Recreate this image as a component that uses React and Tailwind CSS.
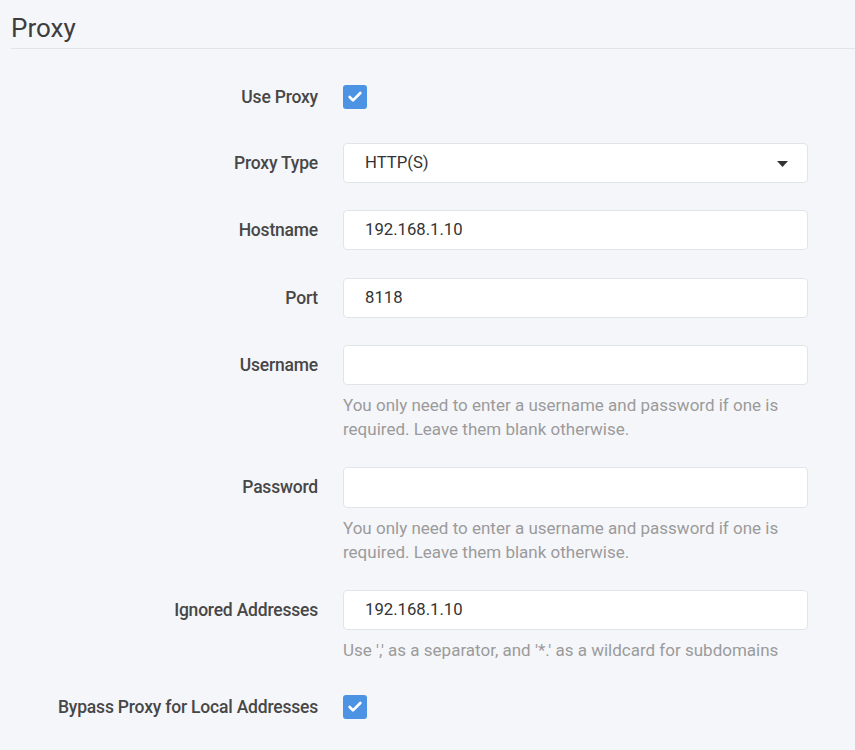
import { Check } from 'lucide-react';

function Row({ label, children, help, className = '' }) {
  return (
    <div className={`grid grid-cols-[307px_465px] gap-x-[25px] ${className}`}>
      <div className="flex h-10 items-center justify-end whitespace-nowrap text-[17.5px] font-medium text-[#474747] tracking-[-0.2px]">
        {label}
      </div>
      <div>
        {children}
        {help && (
          <p className="mb-[2px] mt-[8px] text-[17px] leading-6 text-[#9b9b9b]">{help}</p>
        )}
      </div>
    </div>
  );
}

function TextInput({ value }) {
  return (
    <div className="flex h-10 items-center rounded-[4px] border border-[#e1e5ea] bg-white pl-[21px] text-[16.7px] text-[#333]">
      {value}
    </div>
  );
}

function Checkbox() {
  return (
    <div className="flex h-10 items-center">
      <div className="flex h-6 w-6 items-center justify-center rounded-[3px] bg-[#4d93e3]">
        <Check className="h-4 w-4 text-white" strokeWidth={4} />
      </div>
    </div>
  );
}

const HELP_AUTH = 'You only need to enter a username and password if one is required. Leave them blank otherwise.';

export default function App() {
  return (
    <div className="min-h-[750px] bg-[#f5f6fa] pl-[11px] font-['Roboto',sans-serif]">
      <div className="h-[49px] border-b border-[#e2e4e8] pt-[13px] text-[26px] leading-[30px] text-[#3d3d3d]">
        Proxy
      </div>

      <Row label="Use Proxy" className="mt-[28px]">
        <Checkbox />
      </Row>

      <Row label="Proxy Type" className="mt-[26px]">
        <div className="relative flex h-10 items-center rounded-[4px] border border-[#e1e5ea] bg-white pl-[21px] text-[16.7px] text-[#333]">
          HTTP(S)
          <svg className="absolute right-[19px] top-[17px]" width="11" height="6" viewBox="0 0 11 6">
            <path d="M0 0h11L5.5 6z" fill="#333" />
          </svg>
        </div>
      </Row>

      <Row label="Hostname" className="mt-[27px]">
        <TextInput value="192.168.1.10" />
      </Row>

      <Row label="Port" className="mt-[28px]">
        <TextInput value="8118" />
      </Row>

      <Row label="Username" className="mt-[27px]" help={HELP_AUTH}>
        <TextInput value="" />
      </Row>

      <Row label="Password" className="mt-[24px]" help={HELP_AUTH}>
        <div className="h-[41px] rounded-[4px] border border-[#e1e5ea] bg-white" />
      </Row>

      <Row
        label="Ignored Addresses"
        className="mt-[24px]"
        help="Use ',' as a separator, and '*.' as a wildcard for subdomains"
      >
        <TextInput value="192.168.1.10" />
      </Row>

      <Row label="Bypass Proxy for Local Addresses" className="mt-[23px]">
        <Checkbox />
      </Row>
    </div>
  );
}
